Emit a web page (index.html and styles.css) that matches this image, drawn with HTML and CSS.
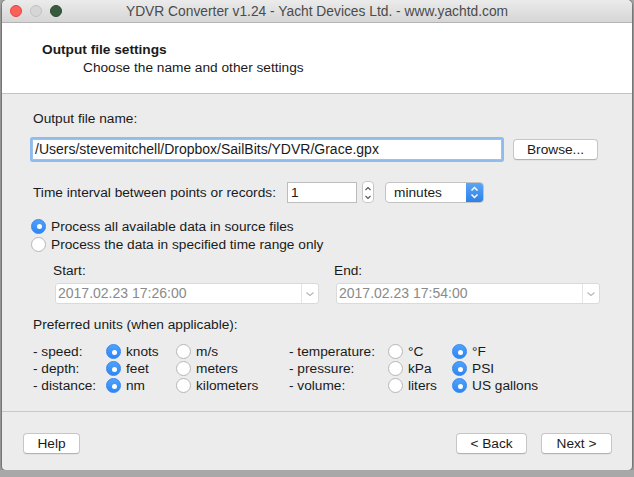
FILE: index.html
```html
<!DOCTYPE html>
<html lang="en">
<head>
    <meta charset="UTF-8">
    <title>YDVR Converter</title>
    <link rel="stylesheet" href="styles.css">
</head>
<body>

<div class="window">
    <div class="titlebar">
        <div class="lights">
            <span class="light close"></span>
            <span class="light minimize"></span>
            <span class="light zoom"></span>
        </div>
        <div class="title">YDVR Converter v1.24 - Yacht Devices Ltd. - www.yachtd.com</div>
    </div>

    <div class="header">
        <div class="header-title">Output file settings</div>
        <div class="header-sub">Choose the name and other settings</div>
    </div>

    <div class="content">
        <div class="label first">Output file name:</div>
        <div class="file-row">
            <div class="text-input focused">/Users/stevemitchell/Dropbox/SailBits/YDVR/Grace.gpx</div>
            <button class="btn browse">Browse...</button>
        </div>

        <div class="interval-row">
            <span class="interval-label">Time interval between points or records:</span>
            <div class="num-input">1</div>
            <div class="stepper">
                <svg width="12" height="22" viewBox="0 0 12 22"><path d="M3.5 8 L6 5.5 L8.5 8 M3.5 14 L6 16.5 L8.5 14" fill="none" stroke="#555" stroke-width="1.1"/></svg>
            </div>
            <div class="popup">
                <span class="popup-text">minutes</span>
                <span class="popup-arrow">
                    <svg width="17" height="21" viewBox="0 0 17 21"><path d="M5.5 8.5 L8.5 5.5 L11.5 8.5 M5.5 12.5 L8.5 15.5 L11.5 12.5" fill="none" stroke="#fff" stroke-width="1.5"/></svg>
                </span>
            </div>
        </div>

        <div class="radio-row first-radio"><span class="radio on"></span>Process all available data in source files</div>
        <div class="radio-row"><span class="radio"></span>Process the data in specified time range only</div>

        <div class="range">
            <div class="range-col">
                <div class="label">Start:</div>
                <div class="combo"><span class="combo-text">2017.02.23 17:26:00</span><span class="combo-arrow"><svg width="10" height="6" viewBox="0 0 10 6"><path d="M1.5 1.5 L5 4.5 L8.5 1.5" fill="none" stroke="#b5b5b5" stroke-width="1.1"/></svg></span></div>
            </div>
            <div class="range-col">
                <div class="label">End:</div>
                <div class="combo"><span class="combo-text">2017.02.23 17:54:00</span><span class="combo-arrow"><svg width="10" height="6" viewBox="0 0 10 6"><path d="M1.5 1.5 L5 4.5 L8.5 1.5" fill="none" stroke="#b5b5b5" stroke-width="1.1"/></svg></span></div>
            </div>
        </div>

        <div class="label units-title">Preferred units (when applicable):</div>
        <div class="units">
            <span class="unit-label">- speed:</span>
            <span class="opt"><span class="radio on"></span>knots</span>
            <span class="opt"><span class="radio"></span>m/s</span>
            <span class="unit-label">- temperature:</span>
            <span class="opt"><span class="radio"></span>°C</span>
            <span class="opt"><span class="radio on"></span>°F</span>

            <span class="unit-label">- depth:</span>
            <span class="opt"><span class="radio on"></span>feet</span>
            <span class="opt"><span class="radio"></span>meters</span>
            <span class="unit-label">- pressure:</span>
            <span class="opt"><span class="radio"></span>kPa</span>
            <span class="opt"><span class="radio on"></span>PSI</span>

            <span class="unit-label">- distance:</span>
            <span class="opt"><span class="radio on"></span>nm</span>
            <span class="opt"><span class="radio"></span>kilometers</span>
            <span class="unit-label">- volume:</span>
            <span class="opt"><span class="radio"></span>liters</span>
            <span class="opt"><span class="radio on"></span>US gallons</span>
        </div>
    </div>

    <div class="footer">
        <button class="btn help">Help</button>
        <div class="spacer"></div>
        <button class="btn nav">&lt; Back</button>
        <button class="btn nav">Next &gt;</button>
    </div>
</div>

</body>
</html>
```

FILE: styles.css
```css
body { margin: 0; background: #a8a8a8; font-family: "Liberation Sans", Arial, sans-serif; font-size: 13.7px; color: #1a1a1a; }

.window {
    margin-left: 2px;
    width: 630px;
    height: 470px;
    background: #ececec;
    border-radius: 5px 5px 4px 4px;
    box-shadow: 0 0 0 1px rgba(0, 0, 0, 0.18), 0 3px 8px rgba(0, 0, 0, 0.3);
    display: flex;
    flex-direction: column;
    overflow: hidden;
}

/* title bar */
.titlebar {
    height: 22px;
    display: flex;
    align-items: center;
    background: linear-gradient(#ebebeb, #d6d6d6);
    border-bottom: 1px solid #b4b4b4;
    flex-shrink: 0;
}
.lights { width: 56px; padding-left: 8px; display: flex; gap: 8px; }
.light { width: 12px; height: 12px; border-radius: 50%; box-sizing: border-box; }
.light.close { background: #fc605b; border: 1px solid #e1473f; }
.light.minimize { background: #d6d6d6; border: 1px solid #c2c2c2; }
.light.zoom { background: #365b3d; border: 1px solid #2c4a31; }
.title { width: 502px; text-align: center; color: #4b4b4b; font-size: 13.8px; white-space: nowrap; }

/* header */
.header {
    height: 71px;
    background: #fff;
    border-bottom: 1px solid #c3c3c3;
    padding: 19px 0 0 40px;
    box-sizing: border-box;
    flex-shrink: 0;
}
.header-title { font-weight: bold; line-height: 16px; }
.header-sub { line-height: 16px; margin-top: 2px; padding-left: 41px; }

/* content */
.content { flex: 1; padding-left: 31px; }
.label { line-height: 16px; }
.label.first { margin-top: 17px; }

.file-row { display: flex; margin-top: 12px; margin-left: -1px; height: 21px; }
.text-input {
    width: 470px;
    height: 21px;
    box-sizing: border-box;
    background: #fff;
    border: 1px solid #9dc1ea;
    padding-left: 2px;
    line-height: 19px;
    font-size: 14px;
}
.text-input.focused { box-shadow: 0 0 0 2px #8fbbed; border-radius: 1px; }

.btn {
    font-family: "Liberation Sans", Arial, sans-serif;
    font-size: 13.7px;
    color: #1a1a1a;
    background: #fff;
    border: 1px solid #c6c6c6;
    border-bottom-color: #b3b3b3;
    border-radius: 4px;
    height: 21px;
    padding: 0;
    box-shadow: 0 1px 0 rgba(0, 0, 0, 0.04);
}
.browse { width: 85px; margin-left: 11px; }

.interval-row { display: flex; align-items: center; margin-top: 21px; height: 22px; }
.interval-label { width: 254px; }
.num-input {
    width: 70px;
    height: 21px;
    box-sizing: border-box;
    background: #fff;
    border: 1px solid #bdbdbd;
    padding-left: 3px;
    line-height: 19px;
}
.stepper {
    width: 12px;
    height: 22px;
    margin-left: 5px;
    background: #fff;
    border: 1px solid #c6c6c6;
    border-radius: 4px;
    box-sizing: border-box;
    display: flex;
    justify-content: center;
    overflow: hidden;
}
.stepper svg { flex-shrink: 0; }
.popup {
    width: 99px;
    height: 21px;
    margin-left: 11px;
    box-sizing: border-box;
    display: flex;
    background: #fff;
    border: 1px solid #c3c3c3;
    border-radius: 4px;
    overflow: hidden;
}
.popup-text { flex: 1; padding-left: 8px; line-height: 19px; }
.popup-arrow { width: 17px; background: linear-gradient(#5aa6f6, #2f80e6); display: flex; align-items: center; justify-content: center; }

.radio-row { display: flex; align-items: center; height: 18px; margin-left: -2px; }
.radio-row.first-radio { margin-top: 14px; }
.radio {
    width: 15px;
    height: 15px;
    box-sizing: border-box;
    border-radius: 50%;
    background: #fff;
    border: 1px solid #b6b6b6;
    margin-right: 5px;
    flex-shrink: 0;
    position: relative;
}
.radio.on { background: linear-gradient(#4fa2fb, #2d86f4); border-color: #3185ee; }
.radio.on::after {
    content: "";
    position: absolute;
    left: 4.5px;
    top: 4.5px;
    width: 5px;
    height: 5px;
    border-radius: 50%;
    background: #fff;
}

.range { display: grid; grid-template-columns: 281px auto; margin-top: 10px; padding-left: 20px; }
.combo {
    width: 264px;
    height: 21px;
    margin-top: 4px;
    margin-left: 2px;
    box-sizing: border-box;
    display: flex;
    border: 1px solid #dadada;
    border-radius: 3px;
    background: #fff;
}
.combo-text { flex: 1; padding-left: 2px; line-height: 19px; color: #8a8a8a; font-size: 14px; }
.combo-arrow { width: 16px; border-left: 1px solid #e4e4e4; display: flex; align-items: center; justify-content: center; }

.units-title { margin-top: 13px; }
.units {
    display: grid;
    grid-template-columns: 73px 70px 113px 99px 64px auto;
    grid-auto-rows: 17px;
    margin-top: 10px;
    align-items: center;
}
.opt { display: flex; align-items: center; }

/* footer */
.footer {
    flex-shrink: 0;
    border-top: 1px solid #c8c8c8;
    display: flex;
    padding: 21px 20px 0 21px;
    box-sizing: border-box;
    height: 59px;
}
.help { width: 57px; }
.spacer { flex: 1; }
.nav { width: 71px; margin-left: 14px; }
```
